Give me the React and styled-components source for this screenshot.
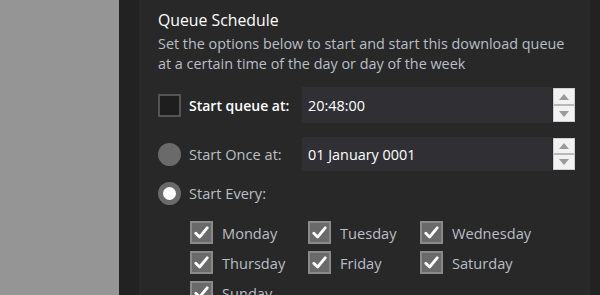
import React from "react";
import styled, { createGlobalStyle } from "styled-components";

const GlobalStyle = createGlobalStyle`
  html, body {
    margin: 0;
    padding: 0;
    background: #282828;
  }
  body {
    font-family: "Open Sans", "Noto Sans", sans-serif;
  }
`;

const Page = styled.div`
  display: flex;
  width: 600px;
  height: 295px;
  overflow: hidden;
`;

const SidePane = styled.div`
  width: 119px;
  background: #959595;
`;

const Divider = styled.div`
  width: ${(p) => p.$w}px;
  background: #222222;
`;

const Main = styled.section`
  flex: 1;
  background: #282828;
  padding: 9px 0 0 19px;
`;

const Title = styled.h2`
  margin: 0;
  font-size: 15.8px;
  font-weight: 400;
  line-height: 22px;
  color: #ffffff;
`;

const Description = styled.p`
  margin: 3px 0 0;
  font-size: 14.4px;
  line-height: 20px;
  color: #b9bfc7;
  white-space: nowrap;
`;

const OptionRow = styled.div`
  display: flex;
  align-items: center;
  margin-top: ${(p) => p.$top}px;
  height: ${(p) => p.$h}px;
`;

const LabelArea = styled.label`
  width: 144px;
  display: flex;
  align-items: center;
  gap: 8px;
`;

const Box = styled.span`
  width: 23px;
  height: 23px;
  box-sizing: border-box;
  border: 2px solid ${(p) => (p.$checked ? "#8a8a8a" : "#545454")};
  background: ${(p) => (p.$checked ? "#6a6a6a" : "#1e1e1e")};
  display: flex;
  align-items: center;
  justify-content: center;
  flex-shrink: 0;
`;

const Radio = styled.span`
  width: 23px;
  height: 23px;
  border-radius: 50%;
  background: #6a6a6a;
  display: flex;
  align-items: center;
  justify-content: center;
  flex-shrink: 0;

  &::after {
    content: "";
    display: ${(p) => (p.$checked ? "block" : "none")};
    width: 13px;
    height: 13px;
    border-radius: 50%;
    background: #ffffff;
  }
`;

const OptionText = styled.span`
  font-size: ${(p) => (p.$bold ? 14 : 14.6)}px;
  font-weight: ${(p) => (p.$bold ? 600 : 400)};
  color: ${(p) => (p.$bold ? "#ffffff" : "#b9bfc7")};
  white-space: nowrap;
`;

const Field = styled.div`
  display: flex;
  align-items: stretch;
  height: 100%;
`;

const Input = styled.div`
  width: 244px;
  background: #303034;
  color: #ffffff;
  font-size: 14.4px;
  padding-left: 6px;
  display: flex;
  align-items: center;
`;

const Spinner = styled.div`
  width: 22px;
  margin: 1px 0 1px 1px;
  display: flex;
  flex-direction: column;
  background: #e6e6e6;
  border: 1px solid #cfcfcf;
  box-sizing: border-box;
`;

const SpinButton = styled.div`
  flex: 1;
  display: flex;
  align-items: center;
  justify-content: center;
  background: #f2f2f2;
  & + & {
    border-top: 2px solid #b8b8b8;
  }
`;

const Days = styled.div`
  display: grid;
  grid-template-columns: 118px 112px 112px;
  grid-auto-rows: 30px;
  margin: 16px 0 0 32px;
`;

const Day = styled.label`
  display: flex;
  align-items: center;
  gap: 9px;
  height: 23px;
`;

const Check = () => (
  <svg width="15" height="13" viewBox="0 0 15 13">
    <path d="M1.8 7.2 L5.6 11 L13.2 1.8" fill="none" stroke="#ffffff" strokeWidth="2.8" strokeLinecap="round" strokeLinejoin="round" />
  </svg>
);

const Arrow = ({ up }) => (
  <svg width="10" height="6" viewBox="0 0 10 6">
    <path d={up ? "M0 6 L5 0 L10 6 Z" : "M0 0 L5 6 L10 0 Z"} fill="#9a9a9a" />
  </svg>
);

const NumberField = ({ value }) => (
  <Field>
    <Input>{value}</Input>
    <Spinner>
      <SpinButton>
        <Arrow up />
      </SpinButton>
      <SpinButton>
        <Arrow />
      </SpinButton>
    </Spinner>
  </Field>
);

const days = ["Monday", "Tuesday", "Wednesday", "Thursday", "Friday", "Saturday", "Sunday"];

export default function App() {
  return (
    <>
      <GlobalStyle />
      <Page>
        <SidePane />
        <Divider $w={20} />
        <Main>
          <Title>Queue Schedule</Title>
          <Description>
            Set the options below to start and start this download queue
            <br />
            at a certain time of the day or day of the week
          </Description>

          <OptionRow $top={13} $h={36}>
            <LabelArea>
              <Box />
              <OptionText $bold>Start queue at:</OptionText>
            </LabelArea>
            <NumberField value="20:48:00" />
          </OptionRow>

          <OptionRow $top={14} $h={34}>
            <LabelArea>
              <Radio />
              <OptionText>Start Once at:</OptionText>
            </LabelArea>
            <NumberField value="01 January 0001" />
          </OptionRow>

          <OptionRow $top={10} $h={24}>
            <LabelArea>
              <Radio $checked />
              <OptionText>Start Every:</OptionText>
            </LabelArea>
          </OptionRow>

          <Days>
            {days.map((d) => (
              <Day key={d}>
                <Box $checked>
                  <Check />
                </Box>
                <OptionText>{d}</OptionText>
              </Day>
            ))}
          </Days>
        </Main>
        <Divider $w={10} />
      </Page>
    </>
  );
}
